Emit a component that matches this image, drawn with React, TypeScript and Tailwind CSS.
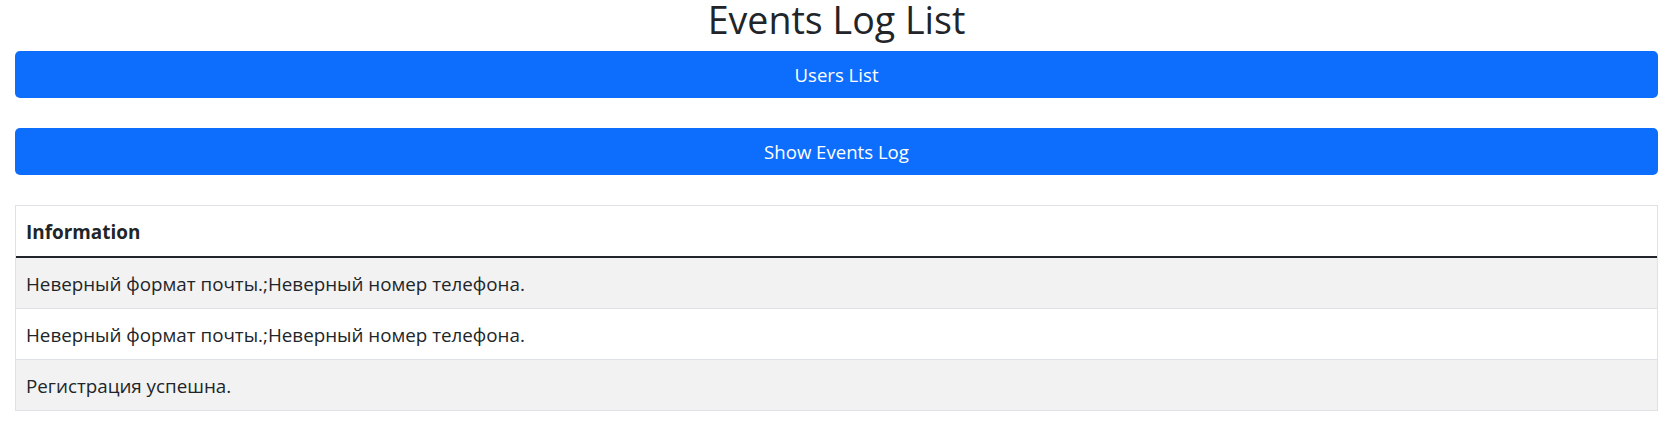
import React from "react";

const font = { fontFamily: '"Open Sans", "Noto Sans", sans-serif' };

const rows = [
  "Неверный формат почты.;Неверный номер телефона.",
  "Неверный формат почты.;Неверный номер телефона.",
  "Регистрация успешна.",
];

export default function App() {
  return (
    <div className="min-h-screen bg-white px-[15px] text-[#212529]" style={font}>
      <div className="flex h-[51px] justify-center pt-[1px]">
        <h2 className="text-[37.6px] font-normal leading-[37px] text-[#212529]">Events Log List</h2>
      </div>
      <button className="flex h-[47px] w-full items-center justify-center rounded-[5px] bg-[#0d6efd] text-[18.6px] text-white">
        Users List
      </button>
      <button className="mt-[30px] flex h-[47px] w-full items-center justify-center rounded-[5px] bg-[#0d6efd] text-[18.6px] text-white">
        Show Events Log
      </button>
      <div className="mt-[30px] border-x border-t border-[#dee2e6]">
        <div className="flex h-[52px] items-center border-b-2 border-[#212529] px-[10px] pt-[3px] text-[18.9px] font-bold">
          Information
        </div>
        {rows.map((r, i) => (
          <div
            key={i}
            className={`flex h-[51px] items-center border-b border-[#dee2e6] px-[10px] pt-[3px] text-[18.8px] ${
              i % 2 === 0 ? "bg-[#f2f2f2]" : "bg-white"
            }`}
          >
            {r}
          </div>
        ))}
      </div>
    </div>
  );
}
